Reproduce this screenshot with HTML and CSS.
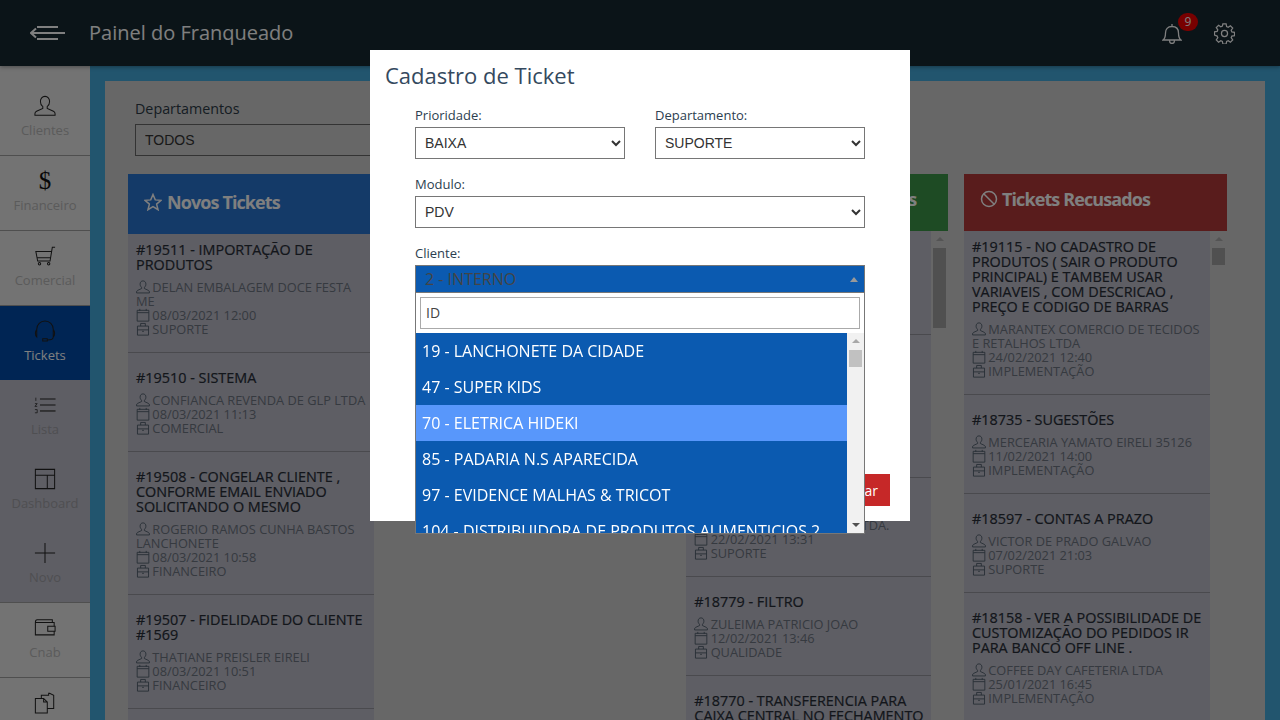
FILE: index.html
```html
<!DOCTYPE html>
<html>
<head>
<meta http-equiv="Content-Type" content="text/html; charset=utf-8"/>
<title>Painel do Franqueado</title>
<link rel="stylesheet" href="styles.css">
</head>
<body>

<svg class="defs" width="0" height="0">
  <symbol id="i-user" viewBox="0 0 24 24"><path d="M12 1.500c-3 0-5 2.300-5 5.600 0 2.400 1.100 4.500 2.600 5.500v2L2.800 17.800c-1.200.6-1.800 1.600-1.800 2.700v1.700h22v-1.700c0-1.100-.6-2.100-1.800-2.700l-6.800-3.200v-2c1.500-1 2.600-3.100 2.600-5.500 0-3.300-2-5.600-5-5.600z"/></symbol>
  <symbol id="i-cal" viewBox="0 0 24 24"><path d="M2 4h20v18.500H2zM2 8h20M6.500 1.500V5M17.500 1.500V5"/></symbol>
  <symbol id="i-case" viewBox="0 0 24 24"><path d="M2.500 7h19v15.500h-19zM8 7V2.500h8V7M2.500 13.500h19M10.500 16h3"/></symbol>
  <symbol id="i-cart" viewBox="0 0 24 24"><path d="M23 2.500h-3l-2.500 15H4L2 7h16.800M3.500 14h14.500"/><circle cx="6" cy="20.500" r="1.300"/><circle cx="16" cy="20.500" r="1.300"/></symbol>
  <symbol id="i-head" viewBox="0 0 24 24"><path d="M3 14v-4a9 9 0 0 1 18 0v4M3 10.500c-1 1-1.500 2.500-1.500 4s.5 3 1.500 4zM21 10.500c1 1 1.500 2.500 1.500 4s-.5 3-1.500 4zM21 18.500c0 2.500-2.500 3.300-6.500 3.300M9.500 20.500h5v2.500h-5z"/></symbol>
  <symbol id="i-dash" viewBox="0 0 24 24"><path d="M1.500 1.500h21v21h-21zM1.500 8h21M14.500 8v14.500"/></symbol>
  <symbol id="i-plus" viewBox="0 0 24 24"><path d="M12 1v22M1 12h22"/></symbol>
  <symbol id="i-wallet" viewBox="0 0 24 24"><path d="M20 6V3H3.500C2 3 1.500 4.500 1.500 6v13.500h20.500v-4M1.500 6H22v4M15 10h8v5.500h-8z"/></symbol>
  <symbol id="i-copy" viewBox="0 0 24 24"><path d="M1.500 7h9l4 4v12h-13zM10.500 7v4h4M8 7V3.500h8v-2h1l4.500 2V18h-7"/></symbol>
</svg>

<header class="topbar">
  <svg class="menu-icon" width="35" height="16" viewBox="0 0 35 16"><path d="M7 2h21M1 8h34M7 14h21M6 3.500 1 8l5 4.500"/></svg>
  <span class="topbar-title">Painel do Franqueado</span>
  <div class="topbar-right">
    <div class="bell">
      <svg width="20" height="21" viewBox="0 0 20 21"><path d="M1 17c2-1.500 2.500-3.500 2.500-7S5.500 3.500 10 3.500 16.500 6.500 16.500 10s.5 5.500 2.500 7zM10 1v2.500M7.500 17.500c0 2 1 3 2.500 3s2.500-1 2.500-3"/></svg>
      <span class="badge">9</span>
    </div>
    <svg class="gear" width="21" height="21" viewBox="0 0 22 22"><circle cx="11" cy="11" r="3.200"/><path d="M9.300 1h3.400l.5 2.800 1.700.7 2.300-1.600 2.400 2.400-1.600 2.300.7 1.700 2.800.5v3.400l-2.800.5-.7 1.700 1.600 2.300-2.400 2.400-2.300-1.600-1.700.7-.5 2.800H9.300l-.5-2.800-1.700-.7-2.300 1.600-2.400-2.400 1.600-2.300-.7-1.700L.5 12.700V9.300l2.800-.5.7-1.700-1.600-2.300 2.400-2.400 2.300 1.600 1.700-.7z"/></svg>
  </div>
</header>

<div class="layout">
  <nav class="sidebar">
    <a class="nav-item nav-first"><svg class="nav-icon"><use href="#i-user"/></svg><span>Clientes</span></a>
    <a class="nav-item"><span class="nav-dollar">$</span><span>Financeiro</span></a>
    <a class="nav-item"><svg class="nav-icon"><use href="#i-cart"/></svg><span>Comercial</span></a>
    <a class="nav-item nav-active"><svg class="nav-icon"><use href="#i-head"/></svg><span>Tickets</span></a>
    <a class="nav-item nav-sub">
      <svg class="nav-icon nav-list" viewBox="0 0 24 24"><path d="M6.500 5.500h17M6.500 12h17"/><path class="thick" d="M6.500 18.500h17"/><path class="tiny" d="M2 4v3.500M1 10.500h2.500L1 13.500h2.500M1 17h2.500v3.500H1"/></svg>
      <span>Lista</span>
    </a>
    <a class="nav-item nav-sub"><svg class="nav-icon"><use href="#i-dash"/></svg><span>Dashboard</span></a>
    <a class="nav-item nav-sub nav-sub-last"><svg class="nav-icon"><use href="#i-plus"/></svg><span>Novo</span></a>
    <a class="nav-item"><svg class="nav-icon"><use href="#i-wallet"/></svg><span>Cnab</span></a>
    <a class="nav-item"><svg class="nav-icon"><use href="#i-copy"/></svg><span>Notas</span></a>
  </nav>

  <main class="frame">
    <div class="panel">
      <div class="filter">
        <label class="filter-label">Departamentos</label>
        <select class="filter-select"><option>TODOS</option></select>
      </div>

      <div class="columns">

        <section class="col">
          <div class="col-head head-blue">
            <svg class="head-icon" width="18" height="18" viewBox="0 0 24 24"><path d="M12 2l3 7.200 7.700.6-5.900 5 1.900 7.500L12 18.200l-6.700 4.100 1.900-7.500-5.900-5L9 9.200z"/></svg>
            Novos Tickets
          </div>
          <div class="col-body">
            <div class="tickets">
              <article class="ticket">
                <h4>#19511 - IMPORTAÇÃO DE PRODUTOS</h4>
                <p><svg class="ic"><use href="#i-user"/></svg> DELAN EMBALAGEM DOCE FESTA ME</p>
                <p><svg class="ic"><use href="#i-cal"/></svg> 08/03/2021 12:00</p>
                <p><svg class="ic"><use href="#i-case"/></svg> SUPORTE</p>
              </article>
              <article class="ticket">
                <h4>#19510 - SISTEMA</h4>
                <p><svg class="ic"><use href="#i-user"/></svg> CONFIANCA REVENDA DE GLP LTDA</p>
                <p><svg class="ic"><use href="#i-cal"/></svg> 08/03/2021 11:13</p>
                <p><svg class="ic"><use href="#i-case"/></svg> COMERCIAL</p>
              </article>
              <article class="ticket">
                <h4>#19508 - CONGELAR CLIENTE , CONFORME EMAIL ENVIADO SOLICITANDO O MESMO</h4>
                <p><svg class="ic"><use href="#i-user"/></svg> ROGERIO RAMOS CUNHA BASTOS LANCHONETE</p>
                <p><svg class="ic"><use href="#i-cal"/></svg> 08/03/2021 10:58</p>
                <p><svg class="ic"><use href="#i-case"/></svg> FINANCEIRO</p>
              </article>
              <article class="ticket">
                <h4>#19507 - FIDELIDADE DO CLIENTE #1569</h4>
                <p><svg class="ic"><use href="#i-user"/></svg> THATIANE PREISLER EIRELI</p>
                <p><svg class="ic"><use href="#i-cal"/></svg> 08/03/2021 10:51</p>
                <p><svg class="ic"><use href="#i-case"/></svg> FINANCEIRO</p>
              </article>
            </div>
            <div class="scroll"><i class="arrow-up"></i><b class="thumb thumb-long"></b></div>
          </div>
        </section>

        <section class="col">
          <div class="col-head col-head-short head-orange">Tickets em Andamento</div>
        </section>

        <section class="col col-shift">
          <div class="col-head col-head-short head-green">
            <svg class="head-icon" width="18" height="18" viewBox="0 0 24 24"><circle cx="12" cy="12" r="10"/><path d="M7 12l4 4 6-7"/></svg>
            Tickets Solucionados
          </div>
          <div class="col-body">
            <div class="tickets">
              <article class="ticket ticket-blank-a"></article>
              <article class="ticket ticket-blank-b"></article>
              <article class="ticket">
                <h4>#18790 - SISTEMA</h4>
                <p><svg class="ic"><use href="#i-user"/></svg> PANIFICADORA SOARES LTDA.</p>
                <p><svg class="ic"><use href="#i-cal"/></svg> 22/02/2021 13:31</p>
                <p><svg class="ic"><use href="#i-case"/></svg> SUPORTE</p>
              </article>
              <article class="ticket">
                <h4>#18779 - FILTRO</h4>
                <p><svg class="ic"><use href="#i-user"/></svg> ZULEIMA PATRICIO JOAO</p>
                <p><svg class="ic"><use href="#i-cal"/></svg> 12/02/2021 13:46</p>
                <p><svg class="ic"><use href="#i-case"/></svg> QUALIDADE</p>
              </article>
              <article class="ticket">
                <h4>#18770 - TRANSFERENCIA PARA CAIXA CENTRAL NO FECHAMENTO</h4>
              </article>
            </div>
            <div class="scroll"><i class="arrow-up"></i><b class="thumb thumb-long"></b></div>
          </div>
        </section>

        <section class="col">
          <div class="col-head col-head-short head-red">
            <svg class="head-icon" width="18" height="18" viewBox="0 0 24 24"><circle cx="12" cy="12" r="10"/><path d="M5 5l14 14"/></svg>
            Tickets Recusados
          </div>
          <div class="col-body">
            <div class="tickets">
              <article class="ticket">
                <h4>#19115 - NO CADASTRO DE PRODUTOS ( SAIR O PRODUTO PRINCIPAL) E TAMBEM USAR VARIAVEIS , COM DESCRICAO , PREÇO E CODIGO DE BARRAS</h4>
                <p><svg class="ic"><use href="#i-user"/></svg> MARANTEX COMERCIO DE TECIDOS E RETALHOS LTDA</p>
                <p><svg class="ic"><use href="#i-cal"/></svg> 24/02/2021 12:40</p>
                <p><svg class="ic"><use href="#i-case"/></svg> IMPLEMENTAÇÃO</p>
              </article>
              <article class="ticket">
                <h4>#18735 - SUGESTÕES</h4>
                <p><svg class="ic"><use href="#i-user"/></svg> MERCEARIA YAMATO EIRELI 35126</p>
                <p><svg class="ic"><use href="#i-cal"/></svg> 11/02/2021 14:00</p>
                <p><svg class="ic"><use href="#i-case"/></svg> IMPLEMENTAÇÃO</p>
              </article>
              <article class="ticket">
                <h4>#18597 - CONTAS A PRAZO</h4>
                <p><svg class="ic"><use href="#i-user"/></svg> VICTOR DE PRADO GALVAO</p>
                <p><svg class="ic"><use href="#i-cal"/></svg> 07/02/2021 21:03</p>
                <p><svg class="ic"><use href="#i-case"/></svg> SUPORTE</p>
              </article>
              <article class="ticket">
                <h4>#18158 - VER A POSSIBILIDADE DE CUSTOMIZAÇÃO DO PEDIDOS IR PARA BANCO OFF LINE .</h4>
                <p><svg class="ic"><use href="#i-user"/></svg> COFFEE DAY CAFETERIA LTDA</p>
                <p><svg class="ic"><use href="#i-cal"/></svg> 25/01/2021 16:45</p>
                <p><svg class="ic"><use href="#i-case"/></svg> IMPLEMENTAÇÃO</p>
              </article>
            </div>
            <div class="scroll"><i class="arrow-up"></i><b class="thumb"></b></div>
          </div>
        </section>

      </div>
    </div>
  </main>
</div>

<div class="backdrop"></div>

<div class="modal">
  <h3 class="modal-title">Cadastro de Ticket</h3>
  <form class="modal-form">
    <div class="row">
      <div class="group">
        <label>Prioridade:</label>
        <select><option>BAIXA</option></select>
      </div>
      <div class="group">
        <label>Departamento:</label>
        <select><option>SUPORTE</option></select>
      </div>
    </div>
    <div class="group">
      <label>Modulo:</label>
      <select><option>PDV</option></select>
    </div>
    <div class="group">
      <label>Cliente:</label>
      <div class="combo">
        <div class="combo-value">2 - INTERNO<i class="combo-arrow"></i></div>
        <div class="combo-drop">
          <div class="combo-search"><input type="text" value="ID"></div>
          <div class="combo-results">
            <ul>
              <li>19 - LANCHONETE DA CIDADE</li>
              <li>47 - SUPER KIDS</li>
              <li class="hover">70 - ELETRICA HIDEKI</li>
              <li>85 - PADARIA N.S APARECIDA</li>
              <li>97 - EVIDENCE MALHAS &amp; TRICOT</li>
              <li>104 - DISTRIBUIDORA DE PRODUTOS ALIMENTICIOS 2</li>
            </ul>
            <div class="combo-scroll"><i class="arrow-up"></i><b></b><i class="arrow-down"></i></div>
          </div>
        </div>
      </div>
    </div>
  </form>
  <div class="modal-foot"><button class="btn-red" type="button">Salvar</button></div>
</div>

</body>
</html>
```

FILE: styles.css
```css
html, body {
  margin: 0;
  height: 720px;
  overflow: hidden;
}

body {
  font-family: "Open Sans", sans-serif;
  background-color: #cecece;
  display: flex;
  flex-direction: column;
}

.defs {
  position: absolute;
}

/* top bar */
.topbar {
  height: 66px;
  flex: none;
  background-color: #162830;
  display: flex;
  align-items: center;
  padding: 0 45px 0 30px;
  box-shadow: 0 1px 4px rgba(0,0,0,.35);
  position: relative;
  z-index: 2;
}

.menu-icon {
  fill: none;
  stroke: #fff;
  stroke-width: 2;
  margin-right: 24px;
}

.topbar-title {
  font-size: 20px;
  color: #fff;
  margin: -2px 0 0 0;
}

.topbar-right {
  margin-left: auto;
  display: flex;
  align-items: center;
  gap: 32px;
}

.bell {
  position: relative;
  height: 21px;
  margin-top: 1px;
}

.bell svg,
.gear {
  fill: none;
  stroke: #fff;
  stroke-width: 1.300;
}

.badge {
  position: absolute;
  left: 16px;
  top: -10px;
  width: 20px;
  height: 18px;
  border-radius: 10px;
  background-color: #f00000;
  color: #fff;
  font-size: 12px;
  line-height: 18px;
  text-align: center;
}

/* sidebar */
.layout {
  flex: 1;
  display: flex;
  min-height: 0;
}

.sidebar {
  width: 90px;
  flex: none;
  background-color: #e6e6e6;
}

.nav-item {
  display: flex;
  flex-direction: column;
  align-items: center;
  height: 74px;
  border-bottom: 1px solid #9e9e9e;
  font-size: 13px;
  line-height: 18px;
  color: #b6b6b6;
}

.nav-first {
  padding-top: 15px;
}

.nav-icon {
  width: 22px;
  height: 22px;
  margin: 14px 0 4px;
  fill: none;
  stroke: #222;
  stroke-width: 1.100;
  flex: none;
}

.nav-dollar {
  height: 22px;
  margin: 14px 0 4px;
  font-family: "Liberation Serif", serif;
  font-size: 25px;
  line-height: 22px;
  color: #111;
}

.nav-active {
  background-color: #004aa8;
  border-bottom: 0;
  color: #fff;
}

.nav-sub {
  background-color: #bcbcc8;
  border-bottom: 0;
  color: #9e9ea4;
}

.nav-sub-last {
  border-bottom: 1px solid #9e9e9e;
}

.nav-list .thick {
  stroke-width: 1.800;
  stroke: #555;
}

.nav-list .tiny {
  stroke-width: .8;
}

/* main area */
.frame {
  flex: 1;
  background-color: #44aadc;
  padding: 15px 15px 0;
  min-width: 0;
}

.panel {
  background-color: #cecece;
  height: 100%;
  box-sizing: border-box;
  padding: 18px 38px 0 23px;
  display: flex;
  flex-direction: column;
}

.filter {
  padding-left: 7px;
  margin-bottom: 18px;
}

.filter-label {
  display: block;
  font-size: 14.300px;
  line-height: 20px;
  margin-bottom: 5px;
  color: #2c3a46;
}

.filter-select {
  display: block;
  width: 300px;
  height: 32px;
  padding: 0 5px;
  font-family: "Liberation Sans", sans-serif;
  font-size: 14px;
  color: #333;
  background-color: #cecece;
  border: 1px solid #666;
  border-radius: 0;
}

.columns {
  flex: 1;
  display: flex;
  justify-content: space-between;
  min-height: 0;
}

.col {
  width: 263px;
  display: flex;
  flex-direction: column;
  min-height: 0;
}

.col-shift {
  width: 262px;
  margin-left: 1px;
}

.col-head {
  height: 60px;
  flex: none;
  box-sizing: border-box;
  padding: 0 16px 4px;
  display: flex;
  align-items: center;
  gap: 5px;
  color: #fff;
  font-size: 18px;
  font-weight: 700;
  letter-spacing: -.9px;
  white-space: nowrap;
}

.col-head-short {
  height: 57px;
  padding-bottom: 8px;
  gap: 4px;
}

.head-icon {
  fill: none;
  stroke: #fff;
  stroke-width: 2;
  flex: none;
}

.head-blue { background-color: #2874d0; }
.head-orange { background-color: #e0a030; }
.head-green {
  background-color: #3c9648;
  justify-content: flex-end;
  padding-right: 32px;
}
.head-red { background-color: #b23838; }

.col-body {
  flex: 1;
  display: flex;
  min-height: 0;
}

.tickets {
  flex: 1;
  min-width: 0;
  background-color: #bcbcc8;
  overflow: hidden;
}

.ticket {
  padding: 17px 4px 16px 8px;
  border-bottom: 1px solid #94949c;
  box-sizing: border-box;
}

.ticket:first-child {
  padding-top: 8px;
}

.ticket h4 {
  margin: 0 0 8px;
  font-size: 14.400px;
  line-height: 15px;
  font-weight: 400;
  color: #262c36;
  -webkit-text-stroke: .2px #262c36;
}

.ticket p {
  margin: 0;
  font-size: 12.800px;
  line-height: 14px;
  color: #6c7480;
}

.ic {
  width: 14px;
  height: 14px;
  vertical-align: -2px;
  margin-right: -1px;
  fill: none;
  stroke: #4c5a68;
  stroke-width: 1.500;
}

.ticket-blank-a { height: 104px; }
.ticket-blank-b { height: 143px; }

.scroll {
  width: 17px;
  flex: none;
  background-color: #cecece;
  position: relative;
  padding-top: 17px;
  box-sizing: border-box;
}

.thumb {
  display: block;
  width: 13px;
  height: 17px;
  margin-left: 2px;
  background-color: #a0a0a0;
}

.thumb-long {
  height: 80px;
}

.arrow-up,
.arrow-down {
  position: absolute;
  left: 5px;
  width: 0;
  height: 0;
  border-left: 4px solid transparent;
  border-right: 4px solid transparent;
}

.arrow-up {
  top: 6px;
  border-bottom: 4px solid #a8a8a8;
}

.arrow-down {
  bottom: 6px;
  border-top: 4px solid #505050;
}

/* modal */
.backdrop {
  position: fixed;
  left: 0;
  top: 0;
  right: 0;
  bottom: 0;
  z-index: 5;
  background-color: rgba(0,0,0,.5);
}

.modal {
  position: fixed;
  left: 370px;
  top: 50px;
  width: 540px;
  height: 471px;
  box-sizing: border-box;
  z-index: 6;
  background-color: #fff;
  display: flex;
  flex-direction: column;
  padding: 0 20px 15px 15px;
  color: #2c3e50;
}

.modal-title {
  margin: 0;
  height: 57px;
  font-size: 22px;
  line-height: 50px;
  font-weight: 400;
  color: #34495e;
}

.modal-form {
  padding: 0 25px 0 30px;
}

.row {
  display: flex;
  gap: 30px;
}

.row .group {
  width: 210px;
}

.group {
  margin-bottom: 17px;
}

.group label {
  display: block;
  font-size: 13px;
  line-height: 16px;
  margin-bottom: 4px;
}

.group select {
  display: block;
  width: 100%;
  height: 32px;
  padding: 0 5px;
  font-family: "Liberation Sans", sans-serif;
  font-size: 14px;
  color: #333;
  background-color: #fff;
  border: 1px solid #767676;
  border-radius: 0;
}

.combo {
  position: relative;
}

.combo-value {
  height: 28px;
  box-sizing: border-box;
  background-color: #0b5ab0;
  border: 1px solid #777;
  padding-left: 9px;
  font-size: 16px;
  line-height: 26px;
  color: #444;
  position: relative;
}

.combo-arrow {
  position: absolute;
  right: 6px;
  top: 11px;
  width: 0;
  height: 0;
  border-left: 4px solid transparent;
  border-right: 4px solid transparent;
  border-bottom: 5px solid #999;
}

.combo-drop {
  position: absolute;
  left: 0;
  right: 0;
  top: 28px;
  height: 241px;
  box-sizing: border-box;
  background-color: #fff;
  border: 1px solid #777;
  border-top: 0;
}

.combo-search {
  padding: 4px;
}

.combo-search input {
  display: block;
  width: 100%;
  height: 32px;
  box-sizing: border-box;
  padding: 0 5px 2px;
  border: 1px solid #aaa;
  font-family: "Open Sans", sans-serif;
  font-size: 14px;
  color: #444;
}

.combo-results {
  height: 200px;
  display: flex;
  overflow: hidden;
}

.combo-results ul {
  flex: 1;
  margin: 0;
  padding: 0;
  list-style: none;
  background-color: #0b5ab0;
  color: #fff;
  overflow: hidden;
}

.combo-results li {
  height: 36px;
  padding-left: 6px;
  font-size: 16px;
  line-height: 36px;
  white-space: nowrap;
}

.combo-results li.hover {
  background-color: #5897fb;
}

.combo-scroll {
  width: 17px;
  flex: none;
  background-color: #f1f1f1;
  position: relative;
  padding-top: 17px;
  box-sizing: border-box;
}

.combo-scroll b {
  display: block;
  width: 13px;
  height: 17px;
  margin-left: 2px;
  background-color: #c1c1c1;
}

.modal-foot {
  margin-top: auto;
  display: flex;
  justify-content: flex-end;
}

.btn-red {
  height: 32px;
  padding: 0 12px;
  border: 0;
  background-color: #c62828;
  color: #fff;
  font-family: "Open Sans", sans-serif;
  font-size: 14px;
}
```
